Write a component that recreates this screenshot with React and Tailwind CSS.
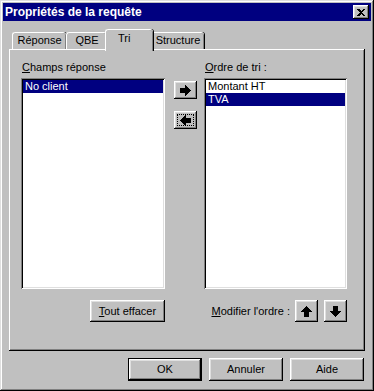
const raised = "bg-[#c0c0c0] shadow-[inset_-1px_-1px_#000,inset_1px_1px_#fff,inset_-2px_-2px_#808080,inset_2px_2px_#dfdfdf]";
const sunken = "bg-white shadow-[inset_1px_1px_#808080,inset_-1px_-1px_#fff,inset_2px_2px_#000,inset_-2px_-2px_#dfdfdf]";

function Arrow({ dir }) {
  const rot = { right: 0, left: 180, up: -90, down: 90 }[dir];
  return (
    <svg width="11" height="11" viewBox="0 0 11 11" shapeRendering="crispEdges" style={{ transform: `rotate(${rot}deg)` }}>
      <polygon points="0,3 5,3 5,0 11,5.5 5,11 5,8 0,8" fill="#000" />
    </svg>
  );
}

function Tab({ label, w, active }) {
  if (active) {
    return (
      <div className={`relative z-10 -mx-[2px] -mb-[2px] h-[22px] ${w} rounded-t-[3px] border-l border-t border-white bg-[#c0c0c0] shadow-[inset_-1px_0_#808080,1px_0_#000] pl-[12px] pt-[2px] text-left`}>
        {label}
      </div>
    );
  }
  return (
    <div className={`h-[17px] ${w} rounded-t-[3px] border-l border-t border-white bg-[#c0c0c0] shadow-[inset_-1px_0_#808080,1px_0_#000] pt-[1px] text-center`}>
      {label}
    </div>
  );
}

export default function App() {
  return (
    <div className="flex h-[391px] w-[374px] flex-col bg-[#c0c0c0] p-[3px] text-[11px] leading-[13px] text-black shadow-[inset_-1px_-1px_#000,inset_1px_1px_#dfdfdf,inset_-2px_-2px_#808080,inset_2px_2px_#fff]" style={{ fontFamily: '"Liberation Sans", Arial, sans-serif' }}>
      <div className="flex h-[18px] items-center justify-between bg-[#000080] pl-[2px] pr-[2px]">
        <span className="text-[12px] font-bold text-white">Propriétés de la requête</span>
        <div className={`flex h-[14px] w-[16px] items-center justify-center ${raised}`}>
          <svg width="8" height="7" viewBox="0 0 8 7" shapeRendering="crispEdges">
            <path d="M0 0h2l2 2 2-2h2L5 3.5 8 7H6L4 5 2 7H0l3-3.5z" fill="#000" />
          </svg>
        </div>
      </div>

      <div className="mt-[7px] flex h-[21px] items-end pl-[9px]">
        <Tab label="Réponse" w="w-[54px]" />
        <Tab label="QBE" w="w-[41px]" />
        <Tab label="Tri" w="w-[48px]" active />
        <Tab label="Structure" w="w-[53px]" />
      </div>

      <div className="ml-[6px] mr-[6px] h-[302px] bg-[#c0c0c0] pl-[12px] pt-[11px] shadow-[inset_-1px_-1px_#000,inset_1px_1px_#fff,inset_-2px_-2px_#808080]">
        <div className="flex">
          <div className="flex w-[144px] flex-col">
            <div className="h-[14px] pl-[1px] pt-[1px]"><u>C</u>hamps réponse</div>
            <div className={`mt-[4px] h-[211px] p-[2px] ${sunken}`}>
              <div className="h-[13px] bg-[#000080] pl-[2px] text-white">No client</div>
            </div>
            <div className="mt-[11px] flex justify-end">
              <button className={`h-[22px] w-[75px] ${raised}`}><u>T</u>out effacer</button>
            </div>
          </div>

          <div className="ml-[9px] flex w-[23px] flex-col gap-[12px] pt-[21px]">
            <button className={`flex h-[18px] w-[23px] items-center justify-center ${raised}`}>
              <Arrow dir="right" />
            </button>
            <button className={`relative flex h-[18px] w-[23px] items-center justify-center ${raised}`}>
              <span className="absolute inset-[3px] border border-dotted border-black" />
              <Arrow dir="left" />
            </button>
          </div>

          <div className="ml-[7px] flex w-[143px] flex-col">
            <div className="h-[14px] pl-[1px] pt-[1px]"><u>O</u>rdre de tri :</div>
            <div className={`mt-[4px] h-[211px] p-[2px] ${sunken}`}>
              <div className="h-[13px] pl-[2px]">Montant HT</div>
              <div className="h-[13px] bg-[#000080] pl-[2px] text-white">TVA</div>
            </div>
            <div className="mt-[11px] flex items-center justify-end">
              <span className="mr-[5px]"><u>M</u>odifier l'ordre :</span>
              <button className={`flex h-[22px] w-[23px] items-center justify-center ${raised}`}>
                <Arrow dir="up" />
              </button>
              <button className={`ml-[6px] flex h-[22px] w-[23px] items-center justify-center ${raised}`}>
                <Arrow dir="down" />
              </button>
            </div>
          </div>
        </div>
      </div>

      <div className="mt-[7px] flex justify-end gap-[7px] pr-[7px]">
        <button className="h-[23px] w-[74px] border border-black">
          <div className={`flex h-full w-full items-center justify-center ${raised}`}>OK</div>
        </button>
        <button className={`h-[23px] w-[74px] ${raised}`}>Annuler</button>
        <button className={`h-[23px] w-[74px] ${raised}`}>Aide</button>
      </div>
    </div>
  );
}
